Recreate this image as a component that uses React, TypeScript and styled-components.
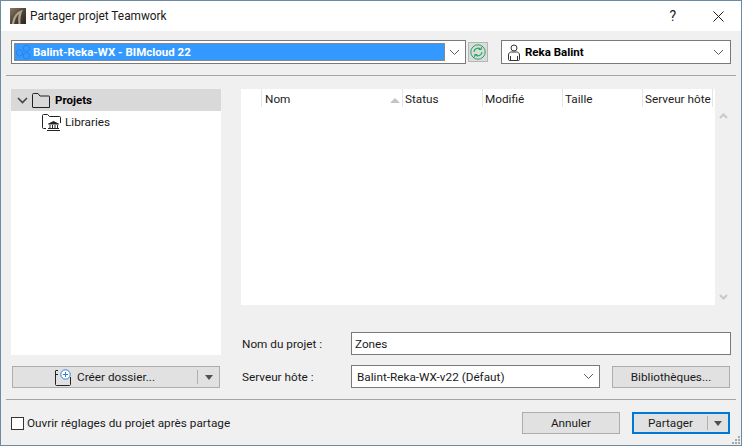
import React from 'react'
import styled, { createGlobalStyle } from 'styled-components'

const GlobalStyle = createGlobalStyle`
  html, body {
    margin: 0;
    padding: 0;
    background: #f0f0f0;
  }
  * {
    box-sizing: border-box;
  }
`

const columns = [
  { label: '', width: 21 },
  { label: 'Nom', width: 141, sorted: true },
  { label: 'Status', width: 80 },
  { label: 'Modifié', width: 80 },
  { label: 'Taille', width: 80 },
  { label: 'Serveur hôte', width: 70 },
]

const Chevron = () => (
  <svg width="11" height="7" viewBox="0 0 11 7">
    <path d="M1 1l4.500 4.500L10 1" fill="none" stroke="#5f5f5f" strokeWidth="1" />
  </svg>
)

const AppLogo = () => (
  <svg width="16" height="16" viewBox="0 0 16 16">
    <defs>
      <linearGradient id="logoBg" x1="0" y1="0" x2="1" y2="1">
        <stop offset="0" stopColor="#8a7a62" />
        <stop offset="0.55" stopColor="#4a4034" />
        <stop offset="1" stopColor="#2c2722" />
      </linearGradient>
    </defs>
    <rect width="16" height="16" fill="url(#logoBg)" />
    <path d="M2 16C3 8 7 3 13 2c-2 3-3 8-2.500 14h-2C8 11 8 8 9 6 6 8 5 12 4 16z" fill="#b0a38c" />
  </svg>
)

const HexIcon = () => (
  <svg width="16" height="16" viewBox="0 0 16 16" fill="none" stroke="#2f80e6" strokeWidth="1">
    <path d="M3.500 5.500l3 1.700v3.400l-3 1.700-3-1.700V7.200z" />
    <path d="M10.500 1l3 1.700v3.400l-3 1.700-3-1.700V2.700z" />
    <path d="M10.500 8.500l3 1.700v3.400l-3 1.700-3-1.700v-3.400z" />
  </svg>
)

const RefreshIcon = () => (
  <svg width="16" height="16" viewBox="0 0 16 16" fill="none" stroke="#1fa65a">
    <circle cx="8" cy="8" r="7.200" strokeWidth="1" />
    <path d="M4 8a4 4 0 0 1 6.500-3M12 8a4 4 0 0 1-6.500 3" strokeWidth="1.200" />
    <path d="M11.300 2.800v2.700H8.700M4.700 13.200v-2.700h2.600" strokeWidth="1" />
  </svg>
)

const UserIcon = () => (
  <svg width="14" height="17" viewBox="0 0 14 17" fill="none" stroke="#333" strokeWidth="1">
    <circle cx="7" cy="4" r="3" />
    <path d="M1.500 15.500V11c0-2 1.500-3 3-3h5c1.500 0 3 1 3 3v4.500c0 .6-.4 1-1 1h-9c-.6 0-1-.4-1-1z" />
    <path d="M3.500 16v-4M10.500 16v-4" />
  </svg>
)

const FolderIcon = () => (
  <svg width="18" height="15" viewBox="0 0 18 15" fill="none" stroke="#222" strokeWidth="1">
    <path d="M.5 14V1.500c0-.5.300-1 1-1h4.500l2 2.500h9c.5 0 .5.300.5.800V14.500H1c-.3 0-.5-.2-.5-.5z" />
  </svg>
)

const LibraryFolderIcon = () => (
  <svg width="19" height="17" viewBox="0 0 19 17" fill="none" stroke="#222" strokeWidth="1">
    <path d="M4 14.500H1.500c-.6 0-1-.4-1-1V1.500c0-.5.300-1 1-1h4l2 2h10c.6 0 1 .4 1 1V9" />
    <path d="M6.500 10l5-2.500 5 2.500z" fill="#222" />
    <path d="M8 11v3M10.500 11v3M13 11v3M15.500 11v3" />
    <path d="M6 14.500h11M5 16.500h13" />
  </svg>
)

const NewFolderIcon = () => (
  <svg width="17" height="17" viewBox="0 0 17 17" fill="none">
    <path d="M3 1.500H1c-.3 0-.5.200-.5.500v13.500c0 .5.300 1 1 1h13c.5 0 1-.5 1-1V8" stroke="#222" />
    <path d="M.5 5.500H3" stroke="#222" />
    <circle cx="10.500" cy="5.500" r="4.700" fill="#fff" stroke="#2f7fd6" />
    <path d="M10.500 3v5M8 5.500h5" stroke="#2f7fd6" />
  </svg>
)

export default function App() {
  return (
    <>
      <GlobalStyle />
      <Window>
        <TitleBar>
          <AppLogo />
          <Title>Partager projet Teamwork</Title>
          <HelpGlyph>?</HelpGlyph>
          <CloseIcon width="11" height="11" viewBox="0 0 11 11">
            <path d="M.5.500l10 10M10.500.500l-10 10" stroke="#222" strokeWidth="1" fill="none" />
          </CloseIcon>
        </TitleBar>

        <Toolbar>
          <ServerCombo>
            <Selection>
              <HexIcon />
              <span>Balint-Reka-WX - BIMcloud 22</span>
            </Selection>
            <ComboArrow>
              <Chevron />
            </ComboArrow>
          </ServerCombo>
          <RefreshButton>
            <RefreshIcon />
          </RefreshButton>
          <UserCombo>
            <UserIcon />
            <UserName>Reka Balint</UserName>
            <Chevron />
          </UserCombo>
        </Toolbar>

        <Divider />

        <Main>
          <LeftColumn>
            <Tree>
              <TreeRow $selected>
                <svg width="11" height="7" viewBox="0 0 11 7">
                  <path d="M1 1l4.500 4.500L10 1" fill="none" stroke="#444" strokeWidth="1.600" />
                </svg>
                <FolderIcon />
                <RootLabel>Projets</RootLabel>
              </TreeRow>
              <TreeChild>
                <LibraryFolderIcon />
                <span>Libraries</span>
              </TreeChild>
            </Tree>
            <SplitButton>
              <SplitMain>
                <NewFolderIcon />
                <span>Créer dossier...</span>
              </SplitMain>
              <SplitSide $width={22}>
                <Caret />
              </SplitSide>
            </SplitButton>
          </LeftColumn>

          <RightColumn>
            <ListArea>
              <ProjectList>
                <ListHeader>
                  {columns.map((col) => (
                    <HeaderCell key={col.label} style={{ width: col.width }}>
                      {col.label}
                      {col.sorted && <SortArrow />}
                    </HeaderCell>
                  ))}
                </ListHeader>
              </ProjectList>
              <ScrollTrack>
                <svg width="9" height="6" viewBox="0 0 9 6">
                  <path d="M1 5l3.500-3.500L8 5" fill="none" stroke="#c8c8c8" strokeWidth="2" />
                </svg>
                <svg width="9" height="6" viewBox="0 0 9 6">
                  <path d="M1 1l3.500 3.500L8 1" fill="none" stroke="#c8c8c8" strokeWidth="2" />
                </svg>
              </ScrollTrack>
            </ListArea>

            <FormRow>
              <FormLabel>Nom du projet :</FormLabel>
              <TextField>Zones</TextField>
            </FormRow>
            <FormRow>
              <FormLabel>Serveur hôte :</FormLabel>
              <SelectField>
                <span>Balint-Reka-WX-v22 (Défaut)</span>
                <Chevron />
              </SelectField>
              <LibraryButton>Bibliothèques...</LibraryButton>
            </FormRow>
          </RightColumn>
        </Main>

        <Divider />

        <Footer>
          <CheckLabel>
            <CheckBox />
            <span>Ouvrir réglages du projet après partage</span>
          </CheckLabel>
          <FooterButtons>
            <CancelButton>Annuler</CancelButton>
            <ShareButton>
              <SplitMain>Partager</SplitMain>
              <SplitSide $width={21}>
                <Caret />
              </SplitSide>
            </ShareButton>
          </FooterButtons>
        </Footer>

        <ResizeGrip width="9" height="9" viewBox="0 0 9 9" fill="#a9a9a9">
          <rect x="6" y="0" width="2" height="2" />
          <rect x="3" y="3" width="2" height="2" />
          <rect x="6" y="3" width="2" height="2" />
          <rect x="0" y="6" width="2" height="2" />
          <rect x="3" y="6" width="2" height="2" />
          <rect x="6" y="6" width="2" height="2" />
        </ResizeGrip>
      </Window>
    </>
  )
}

const Window = styled.div`
  position: relative;
  width: 742px;
  height: 446px;
  background: #f0f0f0;
  border: 1px solid #6d8aa3;
  font-family: Roboto, 'Noto Sans', sans-serif;
  font-size: 11.75px;
  color: #1a1a1a;
  display: flex;
  flex-direction: column;
  overflow: hidden;
`

const TitleBar = styled.div`
  height: 30px;
  flex: none;
  background: #fff;
  display: flex;
  align-items: center;
  padding: 0 17px 0 9px;
`

const Title = styled.div`
  margin-left: 4px;
  font-size: 11.85px;
  flex: 1;
`

const HelpGlyph = styled.div`
  font-size: 14px;
  margin-right: 37px;
`

const CloseIcon = styled.svg`
  display: block;
`

const Toolbar = styled.div`
  display: flex;
  align-items: center;
  padding: 9px 10px 11px;
`

const ComboBase = styled.div`
  height: 24px;
  background: #fff;
  border: 1px solid #7a7a7a;
  display: flex;
  align-items: center;
`

const ServerCombo = styled(ComboBase)`
  width: 455px;
  padding: 2px;
`

const Selection = styled.div`
  width: 431px;
  height: 100%;
  background: #3399ff;
  outline: 1px dotted #d9771e;
  outline-offset: -1px;
  color: #fff;
  font-size: 11.5px;
  font-weight: 700;
  display: flex;
  align-items: center;
  gap: 1px;
  padding-left: 2px;
`

const ComboArrow = styled.div`
  flex: 1;
  display: flex;
  align-items: center;
  justify-content: center;
`

const RefreshButton = styled.div`
  width: 20px;
  height: 20px;
  margin-left: 2px;
  background: #dcdcdc;
  border: 1px solid #b5b5b5;
  display: flex;
  align-items: center;
  justify-content: center;
`

const UserCombo = styled(ComboBase)`
  width: 230px;
  margin-left: 13px;
  padding: 0 6px 0 5px;
`

const UserName = styled.div`
  flex: 1;
  margin-left: 4px;
  font-size: 11.5px;
  font-weight: 700;
  color: #000;
`

const Divider = styled.div`
  height: 1px;
  flex: none;
  margin: 0 5px;
  background: #a5a5a5;
`

const Main = styled.div`
  display: grid;
  grid-template-columns: 210px 490px;
  grid-template-rows: 299px;
  column-gap: 20px;
  padding: 13px 10px 10px;
  height: 323px;
  flex: none;
`

const LeftColumn = styled.div`
  display: flex;
  flex-direction: column;
`

const Tree = styled.div`
  flex: 1;
  background: #fff;
`

const TreeRow = styled.div<{ $selected?: boolean }>`
  height: 22px;
  display: flex;
  align-items: center;
  gap: 4px;
  padding-left: 6px;
  background: ${(p) => (p.$selected ? '#d9d9d9' : 'transparent')};
`

const RootLabel = styled.span`
  font-size: 11.5px;
  font-weight: 700;
  margin-left: 1px;
  color: #000;
`

const TreeChild = styled.div`
  height: 22px;
  display: flex;
  align-items: center;
  gap: 4px;
  padding-left: 31px;
`

const ButtonBase = styled.div`
  background: #e1e1e1;
  border: 1px solid #adadad;
  display: flex;
  align-items: center;
  justify-content: center;
  color: #1a1a1a;
`

const SplitButton = styled(ButtonBase)`
  height: 22px;
  flex: none;
  margin: 11px 1px 0;
`

const SplitMain = styled.div`
  flex: 1;
  display: flex;
  align-items: center;
  justify-content: center;
  gap: 5px;
`

const SplitSide = styled.div<{ $width: number }>`
  width: ${(p) => p.$width}px;
  height: 14px;
  border-left: 1px solid #b0b0b0;
  display: flex;
  align-items: center;
  justify-content: center;
`

const Caret = styled.div`
  width: 0;
  height: 0;
  border-left: 4px solid transparent;
  border-right: 4px solid transparent;
  border-top: 5px solid #505050;
`

const RightColumn = styled.div`
  display: flex;
  flex-direction: column;
`

const ListArea = styled.div`
  display: flex;
  height: 216px;
  margin-bottom: 27px;
`

const ProjectList = styled.div`
  width: 474px;
  background: #fff;
`

const ListHeader = styled.div`
  display: flex;
  height: 18px;
`

const HeaderCell = styled.div`
  position: relative;
  border-right: 1px solid #e5e5e5;
  padding: 1px 0 0 2px;
  line-height: 18px;
  white-space: nowrap;
  overflow: hidden;
  color: #222;

  &:nth-child(2) {
    padding-left: 3px;
  }
`

const SortArrow = styled.div`
  position: absolute;
  right: 2px;
  top: 9px;
  width: 0;
  height: 0;
  border-left: 5px solid transparent;
  border-right: 5px solid transparent;
  border-bottom: 5px solid #c4c4c4;
`

const ScrollTrack = styled.div`
  flex: 1;
  display: flex;
  flex-direction: column;
  align-items: center;
  justify-content: space-between;
  padding: 24px 0 5px;
`

const FormRow = styled.div`
  display: flex;
  align-items: center;
  height: 23px;
  flex: none;

  & + & {
    margin-top: 10px;
  }
`

const FormLabel = styled.div`
  width: 110px;
  padding-left: 1px;
`

const TextField = styled(ComboBase)`
  width: 380px;
  height: 23px;
  padding-left: 3px;
`

const SelectField = styled(ComboBase)`
  width: 249px;
  height: 23px;
  padding: 0 5px;
  justify-content: space-between;
`

const LibraryButton = styled(ButtonBase)`
  width: 118px;
  height: 22px;
  margin-left: 12px;
`

const Footer = styled.div`
  flex: 1;
  display: flex;
  align-items: flex-start;
  justify-content: space-between;
  padding: 12px 11px 0 10px;
`

const CheckLabel = styled.div`
  display: flex;
  align-items: center;
  gap: 3px;
  height: 22px;
`

const CheckBox = styled.div`
  width: 13px;
  height: 13px;
  background: #fff;
  border: 1px solid #333;
`

const FooterButtons = styled.div`
  display: flex;
  gap: 12px;
`

const CancelButton = styled(ButtonBase)`
  width: 98px;
  height: 22px;
`

const ShareButton = styled(ButtonBase)`
  width: 98px;
  height: 22px;
  border: 2px solid #0078d7;
`

const ResizeGrip = styled.svg`
  position: absolute;
  right: 0;
  bottom: 0;
`
